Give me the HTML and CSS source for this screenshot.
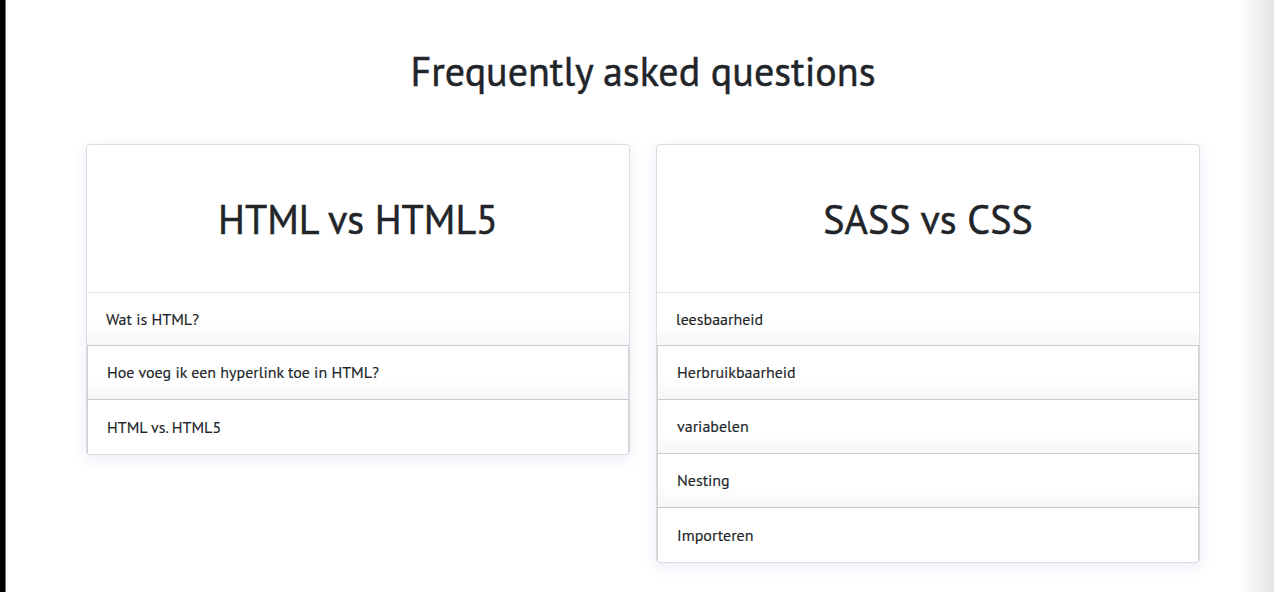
FILE: index.html
```html
<!DOCTYPE html>
<html lang="nl">
<head>
<meta charset="utf-8">
<title>FAQ</title>
<link rel="stylesheet" href="styles.css">
</head>
<body>
<main class="faq">
  <h1 class="faq-title">Frequently asked questions</h1>
  <div class="faq-grid">
    <section class="card">
      <header class="card-head"><h2>HTML vs HTML5</h2></header>
      <ul class="q-list">
        <li class="q first">Wat is HTML?</li>
        <li class="q">Hoe voeg ik een hyperlink toe in HTML?</li>
        <li class="q">HTML vs. HTML5</li>
      </ul>
    </section>
    <section class="card">
      <header class="card-head"><h2>SASS vs CSS</h2></header>
      <ul class="q-list">
        <li class="q first">leesbaarheid</li>
        <li class="q">Herbruikbaarheid</li>
        <li class="q">variabelen</li>
        <li class="q">Nesting</li>
        <li class="q">Importeren</li>
      </ul>
    </section>
  </div>
</main>
</body>
</html>
```
FILE: styles.css
```css
html, body { margin: 0; height: 100%; }
body {
  font-family: "PT Sans", Lato, "Open Sans", sans-serif;
  color: #212529;
  background: linear-gradient(to right, #000 0, #000 5px, #777 5px, #777 6px, #fff 6px, #fff calc(100% - 36px), #e4e4e4 100%);
}
.faq {
  width: 1114px;
  margin-left: 86px;
  padding-top: 44px;
}
.faq-title {
  margin: 0 0 46px;
  text-align: center;
  font-size: 40px;
  font-weight: 500;
  line-height: 54px;
  -webkit-text-stroke: 0.5px #212529;
}
.faq-grid {
  display: flex;
  gap: 26px;
  align-items: flex-start;
}
.card {
  flex: 1;
  background: #fff;
  border: 1px solid #dcdce0;
  border-radius: 4px;
  box-shadow: 0 4px 14px rgba(110, 110, 220, 0.14);
  overflow: hidden;
}
.card-head {
  height: 147px;
  border-bottom: 1px solid #e2e2e6;
  display: flex;
  align-items: center;
  justify-content: center;
}
.card-head h2 {
  margin: 0;
  font-size: 40px;
  font-weight: 500;
  line-height: 1;
  -webkit-text-stroke: 0.5px #212529;
}
.q-list { list-style: none; margin: 0; padding: 0; }
.q {
  height: 53px;
  display: flex;
  align-items: center;
  padding-left: 19px;
  padding-bottom: 1px;
  box-sizing: border-box;
  font-size: 16px;
  -webkit-text-stroke: 0.15px #212529;
  background: linear-gradient(to bottom, #fff 60%, #f6f6f9 100%);
  border-bottom: 1px solid #d4d4dc;
}
.q:not(.first) {
  height: 54px;
  margin: 0 1px;
  box-shadow: -1px 0 1px rgba(0,0,0,0.18), 1px 0 1px rgba(0,0,0,0.18);
}
.q:last-child { border-bottom: 0; background: #fff; height: 54px; }
```
